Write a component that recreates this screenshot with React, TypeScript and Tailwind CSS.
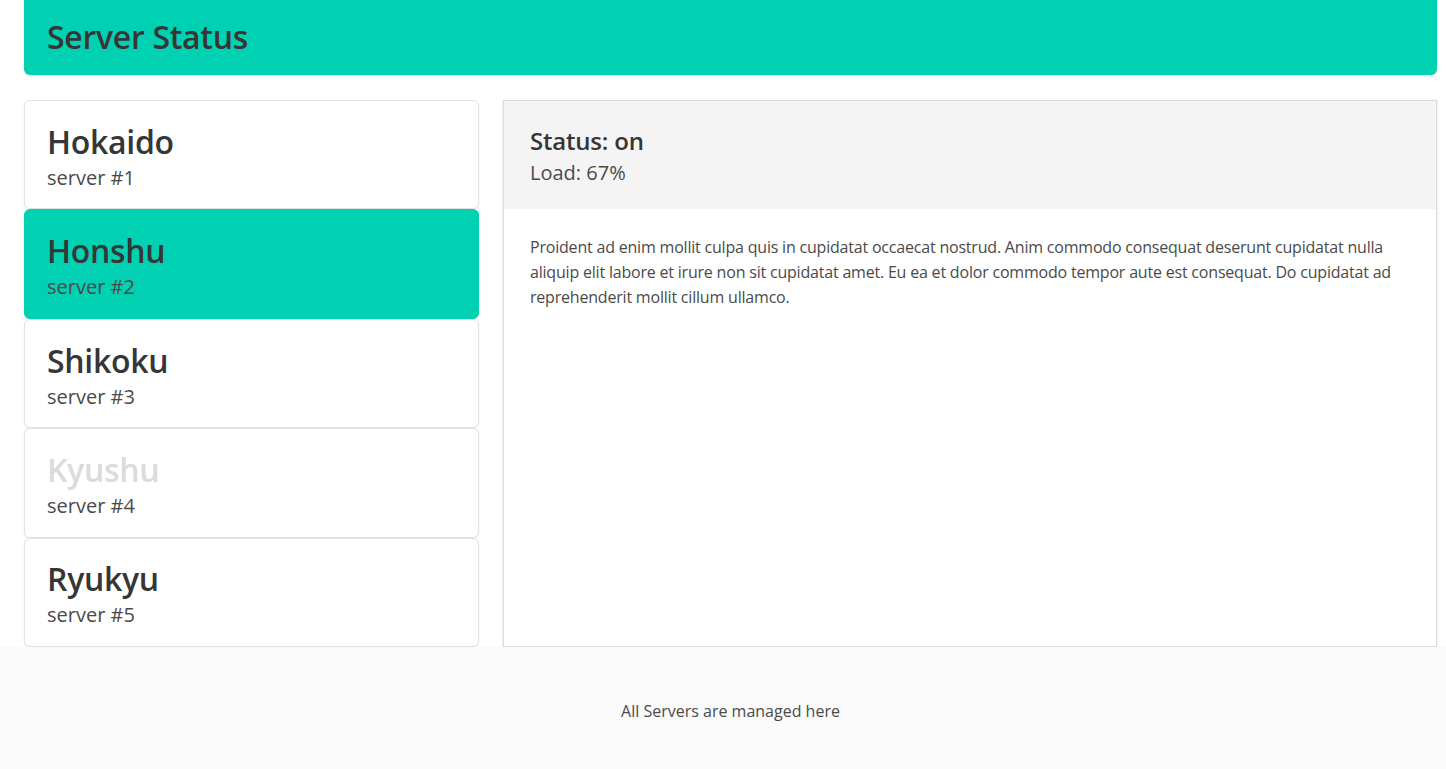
import React from 'react';

const servers = [
  { name: 'Hokaido', id: 1 },
  { name: 'Honshu', id: 2, active: true },
  { name: 'Shikoku', id: 3 },
  { name: 'Kyushu', id: 4, disabled: true },
  { name: 'Ryukyu', id: 5 },
];

function ServerCard({ name, id, active, disabled }: { name: string; id: number; active?: boolean; disabled?: boolean }) {
  const bg = active ? 'bg-[#00d1b2] border-[#00d1b2]' : 'bg-white border-[#e3e3e3]';
  const titleColor = disabled ? 'text-[#dbdbdb]' : 'text-[#363636]';
  return (
    <div className={`flex-1 flex flex-col justify-center px-[22px] pt-[4px] border rounded-[6px] shadow-[0_1px_2px_rgba(10,10,10,0.08)] ${bg}`}>
      <h2 className={`text-[32px] leading-[36px] font-semibold tracking-[-0.3px] ${titleColor}`}>{name}</h2>
      <p className="text-[20px] leading-[25px] mt-[5px] text-[#4a4a4a]">server #{id}</p>
    </div>
  );
}

export default function App() {
  return (
    <div className="min-h-screen bg-white font-['Segoe_UI','Open_Sans',sans-serif] flex flex-col">
      <div className="pl-6 pr-[9px]">
        <header className="h-[75px] bg-[#00d1b2] rounded-b-[6px] px-[23px] flex items-center shadow-[0_1px_2px_rgba(10,10,10,0.1)]">
          <h1 className="text-[32px] font-semibold text-[#363636] leading-none pb-[1px] tracking-[-0.3px]">Server Status</h1>
        </header>

        <main className="mt-[25px] flex gap-6 h-[547px]">
          <div className="w-[455px] flex flex-col">
            {servers.map((s) => (
              <ServerCard key={s.id} {...s} />
            ))}
          </div>

          <section className="flex-1 border border-[#dbdbdb] shadow-[0_1px_3px_rgba(10,10,10,0.12)] bg-white flex flex-col">
            <div className="h-[108px] bg-[#f4f4f4] px-[26px] flex flex-col justify-center">
              <h3 className="text-[24px] leading-[30px] font-semibold text-[#363636] tracking-[-0.2px]">Status: on</h3>
              <p className="text-[20px] leading-[25px] mt-[4px] text-[#4a4a4a]">Load: 67%</p>
            </div>
            <div className="px-[26px] pt-[26px]">
              <p className="text-[16px] leading-[25px] text-[#4a4a4a] tracking-[-0.2px]">
                Proident ad enim mollit culpa quis in cupidatat occaecat nostrud. Anim commodo consequat deserunt cupidatat nulla aliquip elit labore et irure non sit cupidatat amet. Eu ea et dolor commodo tempor aute est consequat. Do cupidatat ad reprehenderit mollit cillum ullamco.
              </p>
            </div>
          </section>
        </main>
      </div>

      <footer className="flex-1 bg-[#fafafa] pl-6 pr-[9px] pt-[52px] pb-12">
        <p className="text-center text-[16px] leading-[25px] text-[#4a4a4a]">All Servers are managed here</p>
      </footer>
    </div>
  );
}
